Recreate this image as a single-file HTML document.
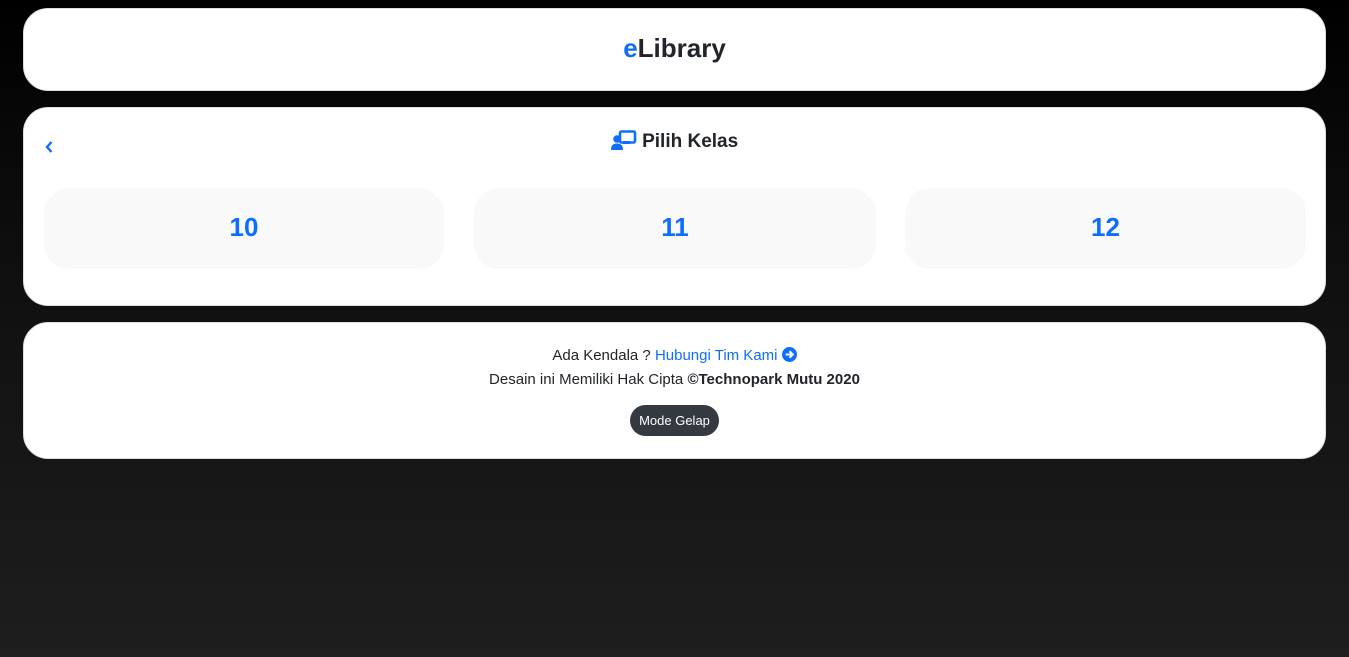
<!DOCTYPE html>
<html><head><style>
*{box-sizing:border-box;margin:0;padding:0}
body{width:1349px;height:657px;background:linear-gradient(#000 0%,#0f0f0f 40%,#1e1e1e 100%);font-family:"Liberation Sans",sans-serif;position:relative;overflow:hidden}
.card{position:absolute;left:23px;width:1303px;background:#fff;border-radius:25px;border:1px solid #ddd}
.btn{position:absolute;top:80px;height:81px;background:#f9f9f9;border-radius:25px;color:#0d6efd;font-size:26px;font-weight:bold;text-align:center;line-height:78px}
</style></head><body>
<div class="card" style="top:8px;height:83px">
<div style="text-align:center;font-size:26px;font-weight:bold;color:#212529;line-height:78px"><span style="color:#0d6efd">e</span>Library</div>
</div>
<div class="card" style="top:107px;height:199px">
<svg style="position:absolute;left:20px;top:32px" width="10" height="14" viewBox="0 0 10 14"><path d="M7.5 2L3 7l4.5 5" stroke="#0d6efd" stroke-width="2.4" fill="none"/></svg>
<div style="position:absolute;left:0;right:0;top:22px;text-align:center;font-size:19px;font-weight:bold;color:#212529">
<svg width="26" height="20" viewBox="0 0 26 20" style="vertical-align:-3px"><rect x="9" y="1.5" width="15" height="11" rx="1.5" fill="none" stroke="#0d6efd" stroke-width="2.6"/><circle cx="6" cy="9" r="3.8" fill="#0d6efd"/><path d="M0 20c0-5.5 3-6.5 6-6.5s6 1 6 6.5z" fill="#0d6efd"/><rect x="12" y="11" width="7" height="3" fill="#0d6efd"/></svg> Pilih Kelas</div>
<div class="btn" style="left:20px;width:400px">10</div>
<div class="btn" style="left:450px;width:402px">11</div>
<div class="btn" style="left:881px;width:401px">12</div>
</div>
<div class="card" style="top:322px;height:137px;text-align:center;font-size:15px;color:#212529">
<div style="margin-top:21px;line-height:24px">Ada Kendala ? <span style="color:#0d6efd">Hubungi Tim Kami <svg width="15" height="15" viewBox="0 0 16 16" style="vertical-align:-2px"><circle cx="8" cy="8" r="8" fill="#0d6efd"/><path d="M4 8h7M8 4.5L11.5 8 8 11.5" stroke="#fff" stroke-width="2.2" fill="none"/></svg></span></div>
<div style="line-height:24px">Desain ini Memiliki Hak Cipta <b>©Technopark Mutu 2020</b></div>
<div style="display:inline-block;margin-top:13px;background:#343a40;color:#fff;font-size:13px;border-radius:16px;padding:0 9px;line-height:31px;height:31px">Mode Gelap</div>
</div>
</body></html>
